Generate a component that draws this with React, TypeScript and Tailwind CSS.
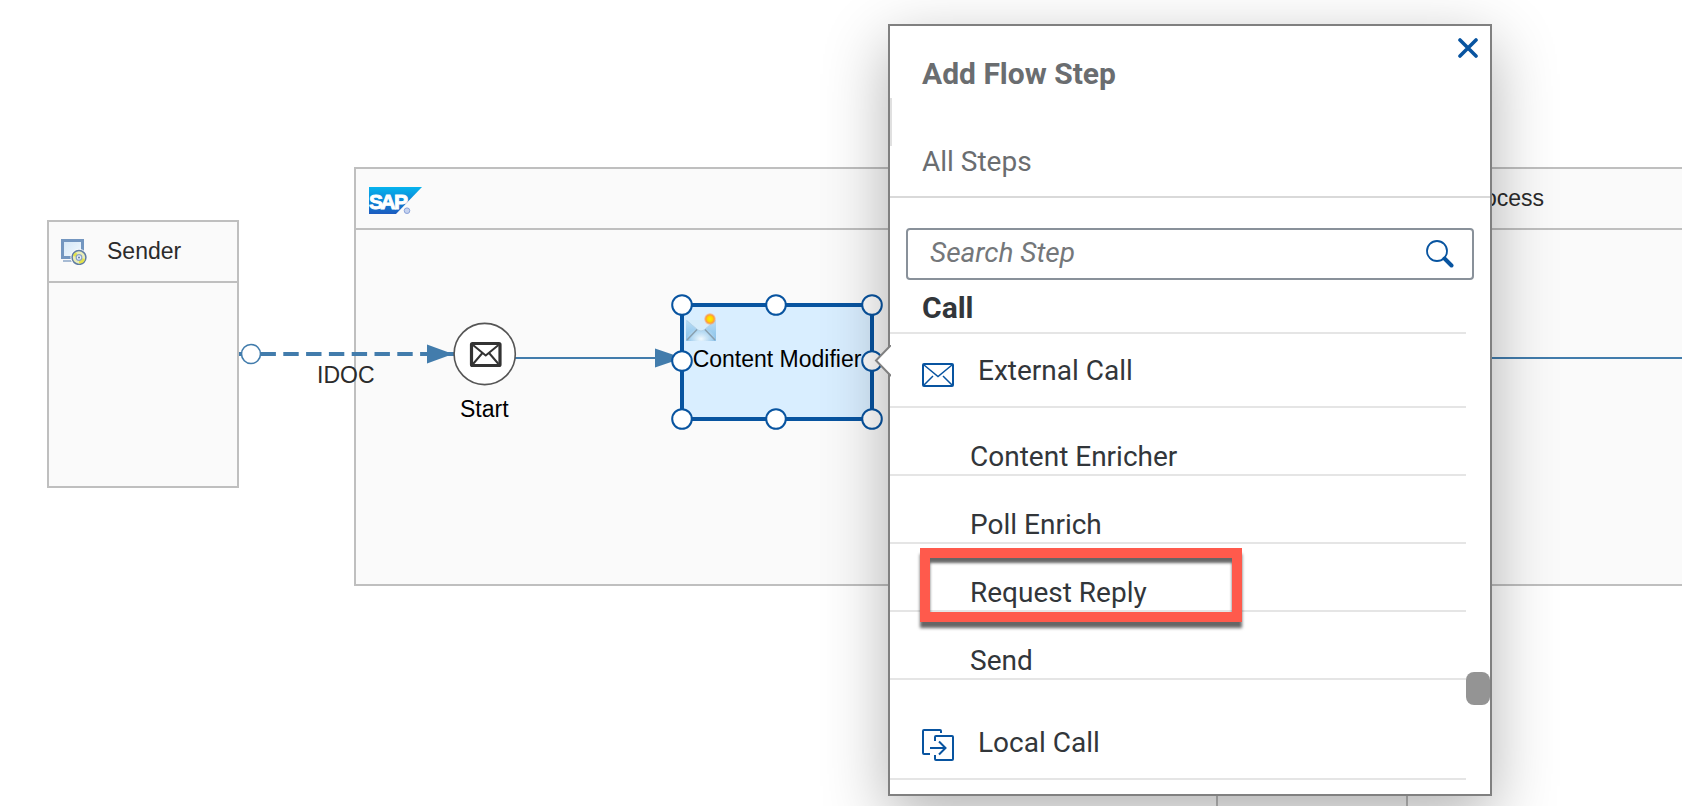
import React from "react";

type Point = { x: number; y: number };

const handles: Point[] = [
  { x: 682, y: 305 },
  { x: 776, y: 305 },
  { x: 872, y: 305 },
  { x: 682, y: 361 },
  { x: 872, y: 361 },
  { x: 682, y: 419 },
  { x: 776, y: 419 },
  { x: 872, y: 419 },
];

const externalSteps = [
  { label: "Content Enricher" },
  { label: "Poll Enrich" },
  { label: "Request Reply", marked: true },
  { label: "Send" },
];

function SystemIcon() {
  return (
    <svg width="26" height="26" viewBox="0 0 26 26" aria-hidden="true">
      <defs>
        <linearGradient id="screen" x1="0" y1="0" x2="1" y2="1">
          <stop offset="0" stopColor="#d3e6f6" />
          <stop offset="1" stopColor="#f6fbff" />
        </linearGradient>
      </defs>
      <rect x="1.5" y="1.5" width="20" height="17" fill="url(#screen)" stroke="#7396c0" strokeWidth="3" />
      <path d="M2 22h9" fill="none" stroke="#9db4d0" strokeWidth="1.8" />
      <circle cx="18" cy="18.5" r="8.5" fill="#fafafa" />
      <circle cx="18" cy="18.5" r="6.9" fill="#e9edb8" stroke="#5f7ca3" strokeWidth="1.5" />
      <path d="M18 18.5L12 17A6 6 0 0 1 15 13.2zM18 18.5l6 1.5a6 6 0 0 1-6 4.5z" fill="#e3e24a" />
      <circle cx="18" cy="18.5" r="2.8" fill="#e8effa" stroke="#8aa2c8" strokeWidth="1.2" />
      <circle cx="18" cy="18.5" r="0.9" fill="#54749d" />
    </svg>
  );
}

function SapLogo() {
  return (
    <svg width="53" height="27" viewBox="0 0 53 27" role="img" aria-label="SAP">
      <defs>
        <linearGradient id="sap" x1="0" y1="0" x2="0" y2="1">
          <stop offset="0" stopColor="#06b4ee" />
          <stop offset="0.5" stopColor="#0c86d6" />
          <stop offset="1" stopColor="#1d5bbf" />
        </linearGradient>
      </defs>
      <path d="M0 0h53L27 27H0z" fill="url(#sap)" />
      <g fontFamily="Liberation Sans, sans-serif" fontWeight="700" fontSize="21" fill="#fff" stroke="#fff" strokeWidth="0.9">
        <text x="0" y="21.5">S</text>
        <text x="11.5" y="21.5">A</text>
        <text x="25" y="21.5">P</text>
      </g>
      <circle cx="38" cy="23.7" r="2.8" fill="#c5d2ef" stroke="#8ba3da" strokeWidth="1" />
    </svg>
  );
}

function ModifierIcon() {
  return (
    <svg width="32" height="29" viewBox="0 0 32 29" aria-hidden="true">
      <defs>
        <linearGradient id="mail" x1="0" y1="0" x2="0" y2="1">
          <stop offset="0" stopColor="#b9def6" />
          <stop offset="1" stopColor="#86bfe8" />
        </linearGradient>
        <radialGradient id="glow" cx="0.5" cy="0.9" r="0.5">
          <stop offset="0" stopColor="#f2faff" />
          <stop offset="1" stopColor="#f2faff" stopOpacity="0" />
        </radialGradient>
        <radialGradient id="sun">
          <stop offset="0" stopColor="#ffee00" />
          <stop offset="0.45" stopColor="#ffd500" />
          <stop offset="0.7" stopColor="#ff9a3c" />
          <stop offset="1" stopColor="#ff9a5c" stopOpacity="0.2" />
        </radialGradient>
      </defs>
      <rect x="0" y="7" width="30" height="21" fill="url(#mail)" />
      <rect x="0" y="7" width="30" height="21" fill="url(#glow)" />
      <path d="M1 7h28L18 17q-3 2-6 0z" fill="#d5ecfa" />
      <path d="M1 8l11 9q3 2 6 0L29 8" fill="none" stroke="#b5d3e8" strokeWidth="1" />
      <path d="M1 27L11 16.5M29 27L19 16.5" stroke="#8a9fae" strokeWidth="1.5" />
      <circle cx="24" cy="6" r="6" fill="url(#sun)" />
    </svg>
  );
}

function Participant({ className, title }: { className: string; title: string }) {
  return (
    <section className={`absolute h-[268px] w-48 border-2 border-[#bfbfbf] bg-[#fafafa] ${className}`}>
      <header className="flex h-[61px] items-center gap-5 border-b-2 border-[#bfbfbf] pl-3">
        <SystemIcon />
        <h2 className="pb-0.5">{title}</h2>
      </header>
    </section>
  );
}

function Connections() {
  return (
    <svg className="absolute inset-0 h-full w-full" aria-hidden="true">
      <g stroke="#427cac" fill="#427cac">
        <path d="M239 354h3" strokeWidth="4" />
        <path d="M260.5 354H428" strokeWidth="4" strokeDasharray="15.4 7.4" />
        <path d="M427 344.5L453 354L427 363.5z" stroke="none" />
        <path d="M446 354h8" strokeWidth="4" />
        <circle cx="251" cy="354" r="9.5" fill="#fff" strokeWidth="1.6" />
        <path d="M515 358H656" strokeWidth="2" />
        <path d="M655 348.5L683 358L655 367.5z" stroke="none" />
        <path d="M874 358H4000" strokeWidth="2" />
      </g>
      <circle cx="484.7" cy="354" r="30.6" fill="#fff" stroke="#555" strokeWidth="1.6" />
      <g fill="none" stroke="#333" strokeLinejoin="round">
        <rect x="471.5" y="343.5" width="28.5" height="22" rx="1" strokeWidth="3.2" />
        <path d="M473 345L485.7 355.5L498.5 345M473 364L482 353.5M498.5 364L489.5 353.5" strokeWidth="2" />
      </g>
    </svg>
  );
}

function StepRow({ label, marked }: { label: string; marked?: boolean }) {
  return (
    <li className="relative border-b-2 border-[#e5e5e5]">
      <button type="button" className="flex h-[66px] w-full items-end pb-px pl-20 text-left">
        {label}
      </button>
      {marked && (
        <span className="pointer-events-none absolute left-[30px] top-1 h-[74px] w-[322px] border-[10px] border-[#ff5a4c] shadow-[0_6px_3px_rgba(0,0,0,0.6),inset_0_5px_3px_rgba(0,0,0,0.6)]" />
      )}
    </li>
  );
}

function FlowStepDialog() {
  return (
    <aside
      role="dialog"
      aria-labelledby="dialog-title"
      className="absolute left-[888px] top-6 w-[604px] border-2 border-[#808080] bg-white font-['Roboto',sans-serif] text-[28px] leading-8 text-[#32363a] shadow-[0_20px_60px_rgba(0,0,0,0.3)]"
    >
      <svg className="absolute -left-4 top-[319px]" width="17" height="32" aria-hidden="true">
        <path d="M17 0L2 15.5L17 31" fill="#fff" stroke="#808080" strokeWidth="2" />
      </svg>
      <span className="absolute left-0 top-[72px] h-12 w-0.5 bg-[#e0e0e0]" />

      <header className="flex h-[172px] flex-col justify-between border-b-2 border-[#d9d9d9] pb-[18px] pl-8 text-[#6a6d70]">
        <div className="flex items-start justify-between">
          <h1 id="dialog-title" className="pt-8 text-[30px] font-bold leading-8">
            Add Flow Step
          </h1>
          <button type="button" aria-label="Close" className="mr-3 mt-3">
            <svg width="20" height="20" viewBox="0 0 20 20" aria-hidden="true">
              <path d="M2 2L18 18M18 2L2 18" stroke="#0854a0" strokeWidth="3.6" strokeLinecap="round" />
            </svg>
          </button>
        </div>
        <p>All Steps</p>
      </header>

      <div className="px-4 pt-[30px]">
        <label className="flex h-[52px] items-center rounded border-2 border-[#89919a] pl-[22px] pr-[18px]">
          <input
            type="text"
            aria-label="Search Step"
            placeholder="Search Step"
            className="min-w-0 flex-1 pb-0.5 italic outline-none placeholder:text-[#74777a]"
          />
          <svg width="28" height="28" viewBox="0 0 28 28" fill="none" stroke="#0854a0" aria-hidden="true">
            <circle cx="11" cy="11" r="10" strokeWidth="1.8" />
            <path d="M18.5 18.5L25.5 25.5" strokeWidth="4" strokeLinecap="round" />
          </svg>
        </label>
      </div>

      <div className="pb-3.5 pr-6">
        <h2 className="h-[54px] border-b-2 border-[#e5e5e5] pl-8 pt-3 text-[30px] font-bold leading-8">Call</h2>
        <div className="flex h-[74px] items-center gap-6 border-b-2 border-[#e5e5e5] pl-8 pt-0.5">
          <svg className="mt-2" width="32" height="24" viewBox="0 0 32 24" fill="none" stroke="#0854a0" aria-hidden="true">
            <rect x="1" y="1" width="30" height="22" rx="1" strokeWidth="2" />
            <path d="M2 2L16 13.5L30 2M2 22L11 13M30 22L21 13" strokeWidth="1.5" />
          </svg>
          <h3>External Call</h3>
        </div>
        <ul>
          {externalSteps.map((step) => (
            <StepRow key={step.label} {...step} />
          ))}
        </ul>
        <div className="flex h-[100px] items-center gap-6 border-b-2 border-[#e5e5e5] pl-8 pt-8">
          <svg width="32" height="32" viewBox="0 0 32 32" fill="none" stroke="#0854a0" strokeWidth="2" aria-hidden="true">
            <path d="M19 4V2q0-1-1-1H2Q1 1 1 2v22q0 1 1 1h6" />
            <path d="M13 12V8q0-1 1-1h16q1 0 1 1v22q0 1-1 1H14q-1 0-1-1v-4" />
            <path d="M8 19h15M17 12.5L23.5 19L17 25.5" />
          </svg>
          <h3 className="pb-1">Local Call</h3>
        </div>
      </div>

      <span className="absolute right-0 top-[646px] h-[33px] w-6 rounded-lg bg-[#949494]" />
    </aside>
  );
}

export default function App() {
  return (
    <main className="relative h-screen overflow-hidden bg-white font-['Liberation_Sans',Arial,sans-serif] text-[23px] leading-7 text-[#2b2b2b]">
      <Participant className="left-[47px] top-[220px]" title="Sender" />
      <Participant className="left-[1216px] top-[728px]" title="Receiver" />

      <section className="absolute left-[354px] top-[167px] h-[419px] w-[2182px] border-2 border-[#bfbfbf] bg-[#fafafa]">
        <header className="grid h-[61px] grid-cols-[1fr_auto_1fr] items-center border-b-2 border-[#bfbfbf]">
          <div className="pl-[13px] pt-1">
            <SapLogo />
          </div>
          <h2 className="pb-0.5">Integration Process</h2>
        </header>
      </section>

      <Connections />
      <p className="absolute left-[317px] top-[361px]">IDOC</p>
      <p className="absolute left-[460px] top-[395px] text-black">Start</p>

      <div className="absolute left-[680px] top-[303px] h-[118px] w-[194px] border-4 border-[#0854a0] bg-[#d9eeff] text-black">
        <span className="absolute left-0.5 top-1.5">
          <ModifierIcon />
        </span>
        <p className="flex h-full items-center justify-center whitespace-nowrap pb-1.5">Content Modifier</p>
      </div>
      <svg className="absolute inset-0 h-full w-full" aria-hidden="true">
        {handles.map((p) => (
          <circle key={`${p.x}-${p.y}`} cx={p.x} cy={p.y} r="9.8" fill="#fff" stroke="#0854a0" strokeWidth="2" />
        ))}
      </svg>

      <FlowStepDialog />
    </main>
  );
}
